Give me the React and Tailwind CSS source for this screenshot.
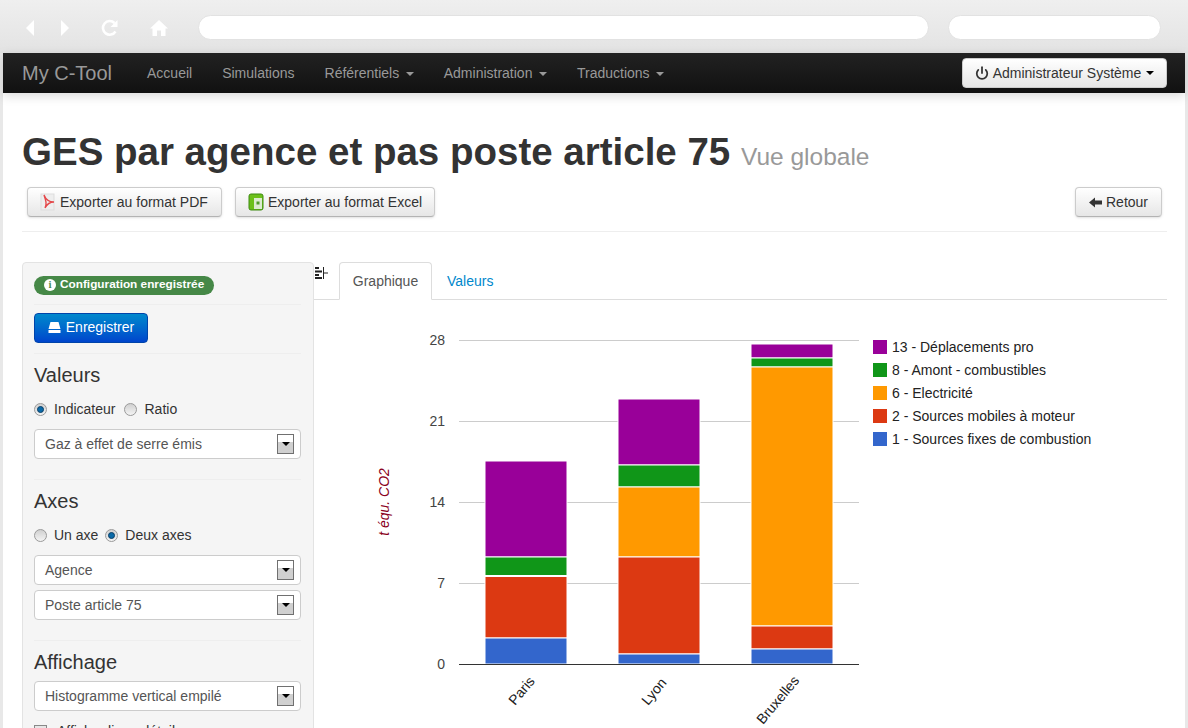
import { Power } from "lucide-react";

const menu = [
  { label: "Accueil" },
  { label: "Simulations" },
  { label: "Référentiels", caret: true },
  { label: "Administration", caret: true },
  { label: "Traductions", caret: true },
];

const legend = [
  { label: "13 - Déplacements pro", color: "bg-[#990099]" },
  { label: "8 - Amont - combustibles", color: "bg-[#109618]" },
  { label: "6 - Electricité", color: "bg-[#ff9900]" },
  { label: "2 - Sources mobiles à moteur", color: "bg-[#dc3912]" },
  { label: "1 - Sources fixes de combustion", color: "bg-[#3366cc]" },
];

const COLORS = { blue: "#3366cc", red: "#dc3912", orange: "#ff9900", green: "#109618", purple: "#990099" };

const bars = [
  { name: "Paris", x: 485, tops: { purple: 461, green: 557, orange: 575.5, red: 576.5, blue: 638 } },
  { name: "Lyon", x: 618, tops: { purple: 399, green: 465, orange: 487, red: 557, blue: 654 } },
  { name: "Bruxelles", x: 751, tops: { purple: 344, green: 358, orange: 367, red: 626, blue: 649 } },
];

function Caret({ className }) {
  return <span className={"inline-block w-0 h-0 border-x-4 border-x-transparent border-t-4 " + className} />;
}

function Radio({ checked }) {
  return (
    <span className="w-[13px] h-[13px] rounded-full border border-[#9a9a9a] bg-gradient-to-b from-[#d0d0d0] to-[#f4f4f4] flex items-center justify-center shrink-0">
      {checked && <span className="w-[7px] h-[7px] rounded-full bg-[#0a6aa8] border border-[#0c3f66]" />}
    </span>
  );
}

function Select({ label }) {
  return (
    <div className="h-[30px] bg-white border border-[#ccc] rounded flex items-center justify-between pl-[10px] pr-[6px] text-[#555]">
      <span className="pt-[1px]">{label}</span>
      <span className="w-[17px] h-5 border border-[#707070] bg-gradient-to-b from-white from-40% to-[#d0d0d0] to-40% flex items-center justify-center">
        <Caret className="border-t-black" />
      </span>
    </div>
  );
}

function Button({ children, className = "" }) {
  return (
    <button className={"h-[30px] px-3 flex items-center whitespace-nowrap text-[14px] text-[#333] bg-gradient-to-b from-white to-[#e6e6e6] border border-[#ccc] border-b-[#b3b3b3] rounded shadow-sm " + className}>
      {children}
    </button>
  );
}

function Chart() {
  // coordinates are kept in page pixels, the svg starts at x=314 y=300
  return (
    <svg width="871" height="428" viewBox="314 300 871 428" className="block">
      {[340, 421, 502, 583].map((y) => (
        <line key={y} x1="459" x2="859" y1={y + 0.5} y2={y + 0.5} stroke="#cccccc" />
      ))}
      {[["28", 345], ["21", 426], ["14", 507], ["7", 588], ["0", 669]].map(([t, y]) => (
        <text key={t} x="445" y={y} textAnchor="end" fontSize="14" fill="#444444">{t}</text>
      ))}
      <text transform="translate(389 502) rotate(-90)" textAnchor="middle" fontSize="14" fontStyle="italic" fill="#8a0020">t équ. CO2</text>
      {bars.map((b) => {
        const order = ["purple", "green", "orange", "red", "blue"];
        return (
          <g key={b.name}>
            {order.map((k, i) => {
              const top = b.tops[k];
              const bottom = i < 4 ? b.tops[order[i + 1]] : 664;
              return <rect key={k} x={b.x} y={top} width="82" height={bottom - top} fill={COLORS[k]} stroke="#ffffff" strokeWidth="1" />;
            })}
          </g>
        );
      })}
      <line x1="459" x2="859" y1="664.5" y2="664.5" stroke="#333333" />
      <text transform="translate(515 706) rotate(-50)" fontSize="14" fill="#222222">Paris</text>
      <text transform="translate(648 706) rotate(-50)" fontSize="14" fill="#222222">Lyon</text>
      <text transform="translate(763 725) rotate(-50)" fontSize="14" fill="#222222">Bruxelles</text>
    </svg>
  );
}

export default function App() {
  return (
    <div className="h-[728px] overflow-hidden bg-[#e8e8e8] font-['Liberation_Sans',Arial,sans-serif] text-[14px] text-[#333]">
      {/* BROWSER BAR */}
      <div className="h-[53px] flex items-center bg-gradient-to-b from-[#efefef] to-[#e3e3e3] pl-[25px] pr-[26px] pt-[2px]">
        <svg width="10" height="16" viewBox="0 0 10 16" className="mr-[25px]"><path d="M9 0 L1 8 L9 16 Z" fill="#fff" /></svg>
        <svg width="10" height="16" viewBox="0 0 10 16" className="mr-[30px]"><path d="M1 0 L9 8 L1 16 Z" fill="#fff" /></svg>
        <svg width="20" height="20" viewBox="0 0 20 20" className="mr-[30px]" fill="none"><path d="M15.5 13.5A6.8 6.8 0 1 1 14.5 5" stroke="#fff" strokeWidth="2.6" /><path d="M17.5 2v7h-7z" fill="#fff" /></svg>
        <svg width="18" height="18" viewBox="0 0 18 18" className="mr-[30px]"><path d="M9 1 L18 9.500 H15.500 V17 H11 V11.500 H7 V17 H2.500 V9.500 H0 Z" fill="#fff" /></svg>
        <div className="w-[731px] h-[25px] rounded-full bg-white border border-[#e2e2e2] mr-[19px]" />
        <div className="w-[213px] h-[25px] rounded-full bg-white border border-[#e2e2e2]" />
      </div>

      <div className="mx-[3px] h-[675px] bg-white">
        {/* NAVBAR */}
        <nav className="h-10 flex items-center bg-gradient-to-b from-[#222] to-[#111] shadow-[0_3px_10px_rgba(0,0,0,0.15)] pl-[19px] pr-[18px]">
          <span className="text-[20px] text-[#999] mr-[35px]">My C-Tool</span>
          <div className="flex gap-[30px] text-[#999]">
            {menu.map((m) => (
              <span key={m.label} className="flex items-center gap-[6.5px]">
                {m.label}
                {m.caret && <Caret className="border-t-[#999] mt-[1px]" />}
              </span>
            ))}
          </div>
          <button className="ml-auto h-[30px] w-[205px] flex items-center justify-center gap-[4px] bg-gradient-to-b from-white to-[#e6e6e6] border border-[#ccc] rounded text-[#333]">
            <Power size={14} strokeWidth={3} />
            Administrateur Système
            <Caret className="border-t-black ml-[1px]" />
          </button>
        </nav>

        <div className="pl-[19px] pr-[18px]">
          {/* TITLE */}
          <h1 className="mt-[37px] h-[44px] leading-[44px] text-[38.5px] font-bold text-[#333] whitespace-nowrap">
            GES par agence et pas poste article 75 <small className="text-[24.5px] font-normal text-[#999]">Vue globale</small>
          </h1>
          <div className="mt-[13px] pl-[5px] pr-[5px] pb-[14px] border-b border-[#eee] flex">
            <Button className="w-[195px] mr-[13px]">
              <svg width="16" height="18" viewBox="0 0 16 18" className="mr-[4px] shrink-0">
                <rect x="1" y="1" width="13" height="16" fill="#eee" stroke="#ddd" />
                <path d="M4 2 C6 8 7 11 5 15 C7 11 10 9 14 9 C10 9 6 7 4 2Z" fill="none" stroke="#e4484a" strokeWidth="1.4" />
              </svg>
              Exporter au format PDF
            </Button>
            <Button className="w-[200px]">
              <svg width="16" height="18" viewBox="0 0 16 18" className="mr-[4px] shrink-0">
                <rect x="1" y="1" width="14" height="16" rx="2" fill="#6cc01a" stroke="#3d8a10" />
                <rect x="6" y="5" width="8" height="11" fill="#dcebd0" />
                <rect x="8.500" y="8.500" width="3" height="3" fill="#4f9a2a" />
              </svg>
              Exporter au format Excel
            </Button>
            <Button className="ml-auto w-[87px] gap-[4px] justify-center">
              <svg width="13" height="11" viewBox="0 0 13 11"><path d="M0 5.500 L6 0.500 V3.500 H13 V7.500 H6 V10.500 Z" fill="#333" /></svg>
              Retour
            </Button>
          </div>

          {/* MAIN */}
          <div className="mt-[30px] flex">
            {/* SIDEBAR */}
            <aside className="w-[292px] shrink-0 bg-[#f5f5f5] border border-[#e3e3e3] rounded pl-[11px] pr-[12px] pt-[13px] h-[600px]">
              <div className="pb-[9px] border-b border-[#eee] -mt-[3px]">
                <span className="inline-flex items-center gap-[4px] h-[19px] px-[10px] rounded-full bg-[#468847] text-white text-[11.8px] font-bold">
                  <span className="w-[12px] h-[12px] rounded-full bg-white text-[#468847] text-[10px] leading-[12px] text-center font-serif">i</span>
                  Configuration enregistrée
                </span>
              </div>
              <div className="pt-[8px] pb-[10px] border-b border-[#eee]">
                <button className="h-[30px] w-[114px] flex items-center justify-center gap-[5px] rounded bg-gradient-to-b from-[#0088cc] to-[#0044cc] border border-[#0044aa] text-white">
                  <svg width="13" height="11" viewBox="0 0 13 11"><path d="M2.500 0H10.500L12.500 7H0.500Z M0.500 8H12.500V11H0.500Z" fill="#fff" /></svg>
                  Enregistrer
                </button>
              </div>
              <div className="pt-[9px] pb-[20px] border-b border-[#eee]">
                <h3 className="text-[20px] leading-[24px] text-[#333]">Valeurs</h3>
                <div className="mt-[12px] flex items-center text-[#333]">
                  <Radio checked />
                  <span className="ml-[7px] mr-[9px]">Indicateur</span>
                  <Radio />
                  <span className="ml-[7px]">Ratio</span>
                </div>
                <div className="mt-[9px]"><Select label="Gaz à effet de serre émis" /></div>
              </div>
              <div className="pt-[9px] pb-[20px] border-b border-[#eee]">
                <h3 className="text-[20px] leading-[24px] text-[#333]">Axes</h3>
                <div className="mt-[12px] flex items-center text-[#333]">
                  <Radio />
                  <span className="ml-[7px] mr-[7px]">Un axe</span>
                  <Radio checked />
                  <span className="ml-[7px]">Deux axes</span>
                </div>
                <div className="mt-[9px] flex flex-col gap-[5px]">
                  <Select label="Agence" />
                  <Select label="Poste article 75" />
                </div>
              </div>
              <div className="pt-[9px]">
                <h3 className="text-[20px] leading-[24px] text-[#333]">Affichage</h3>
                <div className="mt-[7px]"><Select label="Histogramme vertical empilé" /></div>
                <div className="mt-[13px] flex items-start gap-[10px] leading-[14px]">
                  <span className="w-[13px] h-[13px] mt-[1px] border border-[#888] bg-[#e6e6e6]" />
                  Afficher ligne détail
                </div>
              </div>
            </aside>

            {/* RIGHT */}
            <div className="flex-1 min-w-0">
              <div className="flex border-b border-[#ddd] h-[38px] relative">
                <svg width="14" height="12" viewBox="0 0 14 12" className="absolute left-[1px] top-[5px]">
                  <path d="M0 0h4v2H0z M0 3.500h7v2H0z M0 7h4v2H0z M0 10h7v2H0z" fill="#222" />
                  <path d="M8.500 0v12 M9 6h4" stroke="#222" />
                </svg>
                <div className="ml-[25px] w-[93px] h-[38px] flex items-center justify-center bg-white border border-[#ddd] border-b-white rounded-t text-[#555]">Graphique</div>
                <div className="ml-[15px] h-[38px] flex items-center text-[#0088cc]">Valeurs</div>
              </div>
              <div className="relative">
                <Chart />
                {/* LEGEND */}
                <div className="absolute left-[559px] top-[39px] flex flex-col gap-[7px] text-[#222]">
                  {legend.map((l) => (
                    <div key={l.label} className="flex items-center h-4 gap-[5px] whitespace-nowrap">
                      <span className={"w-[14px] h-[14px] " + l.color} />
                      {l.label}
                    </div>
                  ))}
                </div>
              </div>
            </div>
          </div>
        </div>
      </div>
    </div>
  );
}
